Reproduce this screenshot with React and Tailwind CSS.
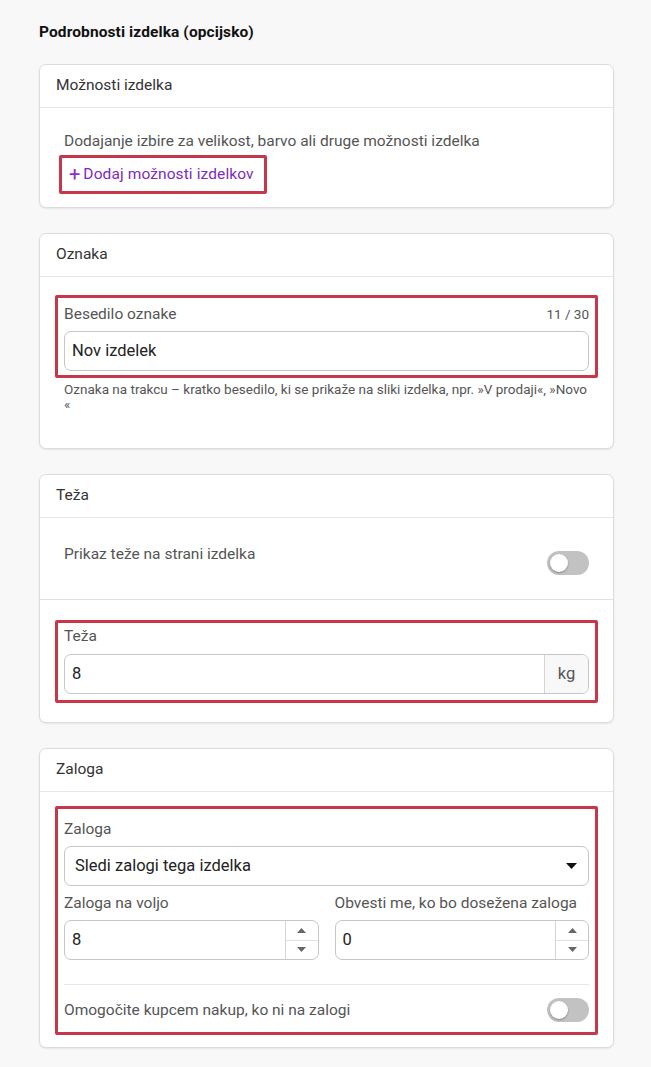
import React from 'react';

const font = { fontFamily: 'Roboto, "Noto Sans", sans-serif' };

const Card = ({ title, children }) => (
  <div className="bg-white border border-[#dcdcdc] rounded-[7px] shadow-[0_1px_2px_rgba(0,0,0,0.08)]">
    <div className="h-[43px] px-4 flex items-center border-b border-[#e6e6e6] text-[15.5px] text-[#333]">{title}</div>
    {children}
  </div>
);

const Toggle = () => (
  <div className="w-[42px] h-[24px] rounded-full bg-[#c2c2c2] flex items-center px-[3px] shrink-0">
    <div className="w-[18px] h-[18px] rounded-full bg-white shadow-[0_1px_2px_rgba(0,0,0,0.3)]" />
  </div>
);

const Highlight = ({ className = '', children }) => (
  <div className={`border-[3px] border-[#c8364a] rounded-[2px] ${className}`}>{children}</div>
);

const Stepper = ({ value }) => (
  <div className="flex h-[40px] border border-[#c6c6c6] rounded-[7px] overflow-hidden">
    <div className="flex-1 flex items-center pl-[7px] text-[16.5px] text-[#222]">{value}</div>
    <div className="w-[33px] border-l border-[#d4d4d4] flex flex-col">
      <div className="flex-1 flex items-center justify-center border-b border-[#e0e0e0]">
        <svg width="9" height="5" viewBox="0 0 9 5"><path d="M0 5L4.5 0L9 5Z" fill="#666" /></svg>
      </div>
      <div className="flex-1 flex items-center justify-center">
        <svg width="9" height="5" viewBox="0 0 9 5"><path d="M0 0L4.5 5L9 0Z" fill="#666" /></svg>
      </div>
    </div>
  </div>
);

export default function App() {
  return (
    <div className="min-h-screen bg-[#f8f8f8] pl-[39px] pr-[37px] pt-[22px] pb-5" style={font}>
      <h2 className="text-[15.5px] font-bold text-[#111] leading-[20px] mb-[22px] tracking-[0.1px]">Podrobnosti izdelka (opcijsko)</h2>

      <div className="flex flex-col gap-[25px]">
        {/* options */}
        <Card title="Možnosti izdelka">
          <div className="px-6 pt-[23px] pb-[13px]">
            <p className="text-[15.5px] leading-[20px] text-[#555]">Dodajanje izbire za velikost, barvo ali druge možnosti izdelka</p>
            <Highlight className="inline-flex items-center h-[39px] mt-[4px] -ml-[5px] pl-[7px] pr-[10px]">
              <span className="text-[#8a2fc8] text-[20px] leading-none mr-[3px] -mt-[2px]">+</span>
              <span className="text-[#7d2bc0] text-[15.5px] tracking-[0.1px]">Dodaj možnosti izdelkov</span>
            </Highlight>
          </div>
        </Card>

        {/* badge */}
        <Card title="Oznaka">
          <div className="px-6 pt-[18px] pb-[36px]">
            <Highlight className="-mx-[9px] px-[6px] pt-[6px] pb-[4px]">
              <div className="flex justify-between items-center text-[#555] leading-[20px]">
                <span className="text-[15.5px]">Besedilo oznake</span>
                <span className="text-[13.5px]">11 / 30</span>
              </div>
              <div className="mt-[7px] h-[40px] border border-[#c6c6c6] rounded-[7px] flex items-center px-[7px] text-[16.5px] text-[#222]">Nov izdelek</div>
            </Highlight>
            <p className="mt-[4px] text-[13.5px] leading-[15px] text-[#555]">Oznaka na trakcu – kratko besedilo, ki se prikaže na sliki izdelka, npr. »V prodaji«, »Novo «</p>
          </div>
        </Card>

        {/* weight */}
        <Card title="Teža">
          <div className="px-6 pt-[26px] pb-[24px] flex justify-between border-b border-[#e0e0e0]">
            <span className="text-[15.5px] leading-[20px] text-[#555]">Prikaz teže na strani izdelka</span>
            <div className="pt-[7px]"><Toggle /></div>
          </div>
          <div className="px-6 pt-[20px] pb-[19px]">
            <Highlight className="-mx-[9px] px-[6px] pt-[3px] pb-[6px]">
              <div className="text-[15.5px] leading-[20px] text-[#555]">Teža</div>
              <div className="mt-[8px] flex h-[40px] border border-[#c6c6c6] rounded-[7px] overflow-hidden">
                <div className="flex-1 flex items-center px-[7px] text-[16.5px] text-[#222]">8</div>
                <div className="w-[44px] border-l border-[#d4d4d4] bg-[#f8f8f8] flex items-center justify-center text-[16.5px] text-[#555]">kg</div>
              </div>
            </Highlight>
          </div>
        </Card>

        {/* stock */}
        <Card title="Zaloga">
          <div className="px-6 pt-[14px] pb-[12px]">
            <Highlight className="-mx-[9px] px-[6px] pt-[10px] pb-[10px]">
              <div className="text-[15.5px] leading-[20px] text-[#555]">Zaloga</div>
              <div className="mt-[7px] h-[40px] border border-[#c6c6c6] rounded-[7px] flex items-center justify-between pl-[10px] pr-[11px] text-[16.5px] text-[#222]">
                <span>Sledi zalogi tega izdelka</span>
                <svg width="11" height="6" viewBox="0 0 11 6"><path d="M0 0L5.5 6L11 0Z" fill="#111" /></svg>
              </div>
              <div className="mt-[7px] grid grid-cols-2 gap-4">
                <div>
                  <div className="text-[15.5px] leading-[20px] text-[#555] mb-[7px]">Zaloga na voljo</div>
                  <Stepper value="8" />
                </div>
                <div>
                  <div className="text-[15.5px] leading-[20px] text-[#555] mb-[7px] whitespace-nowrap">Obvesti me, ko bo dosežena zaloga</div>
                  <Stepper value="0" />
                </div>
              </div>
              <div className="mt-[24px] border-t border-[#e6e6e6] pt-[13px] flex items-center justify-between">
                <span className="text-[15.5px] leading-[20px] text-[#555]">Omogočite kupcem nakup, ko ni na zalogi</span>
                <Toggle />
              </div>
            </Highlight>
          </div>
        </Card>
      </div>
    </div>
  );
}
